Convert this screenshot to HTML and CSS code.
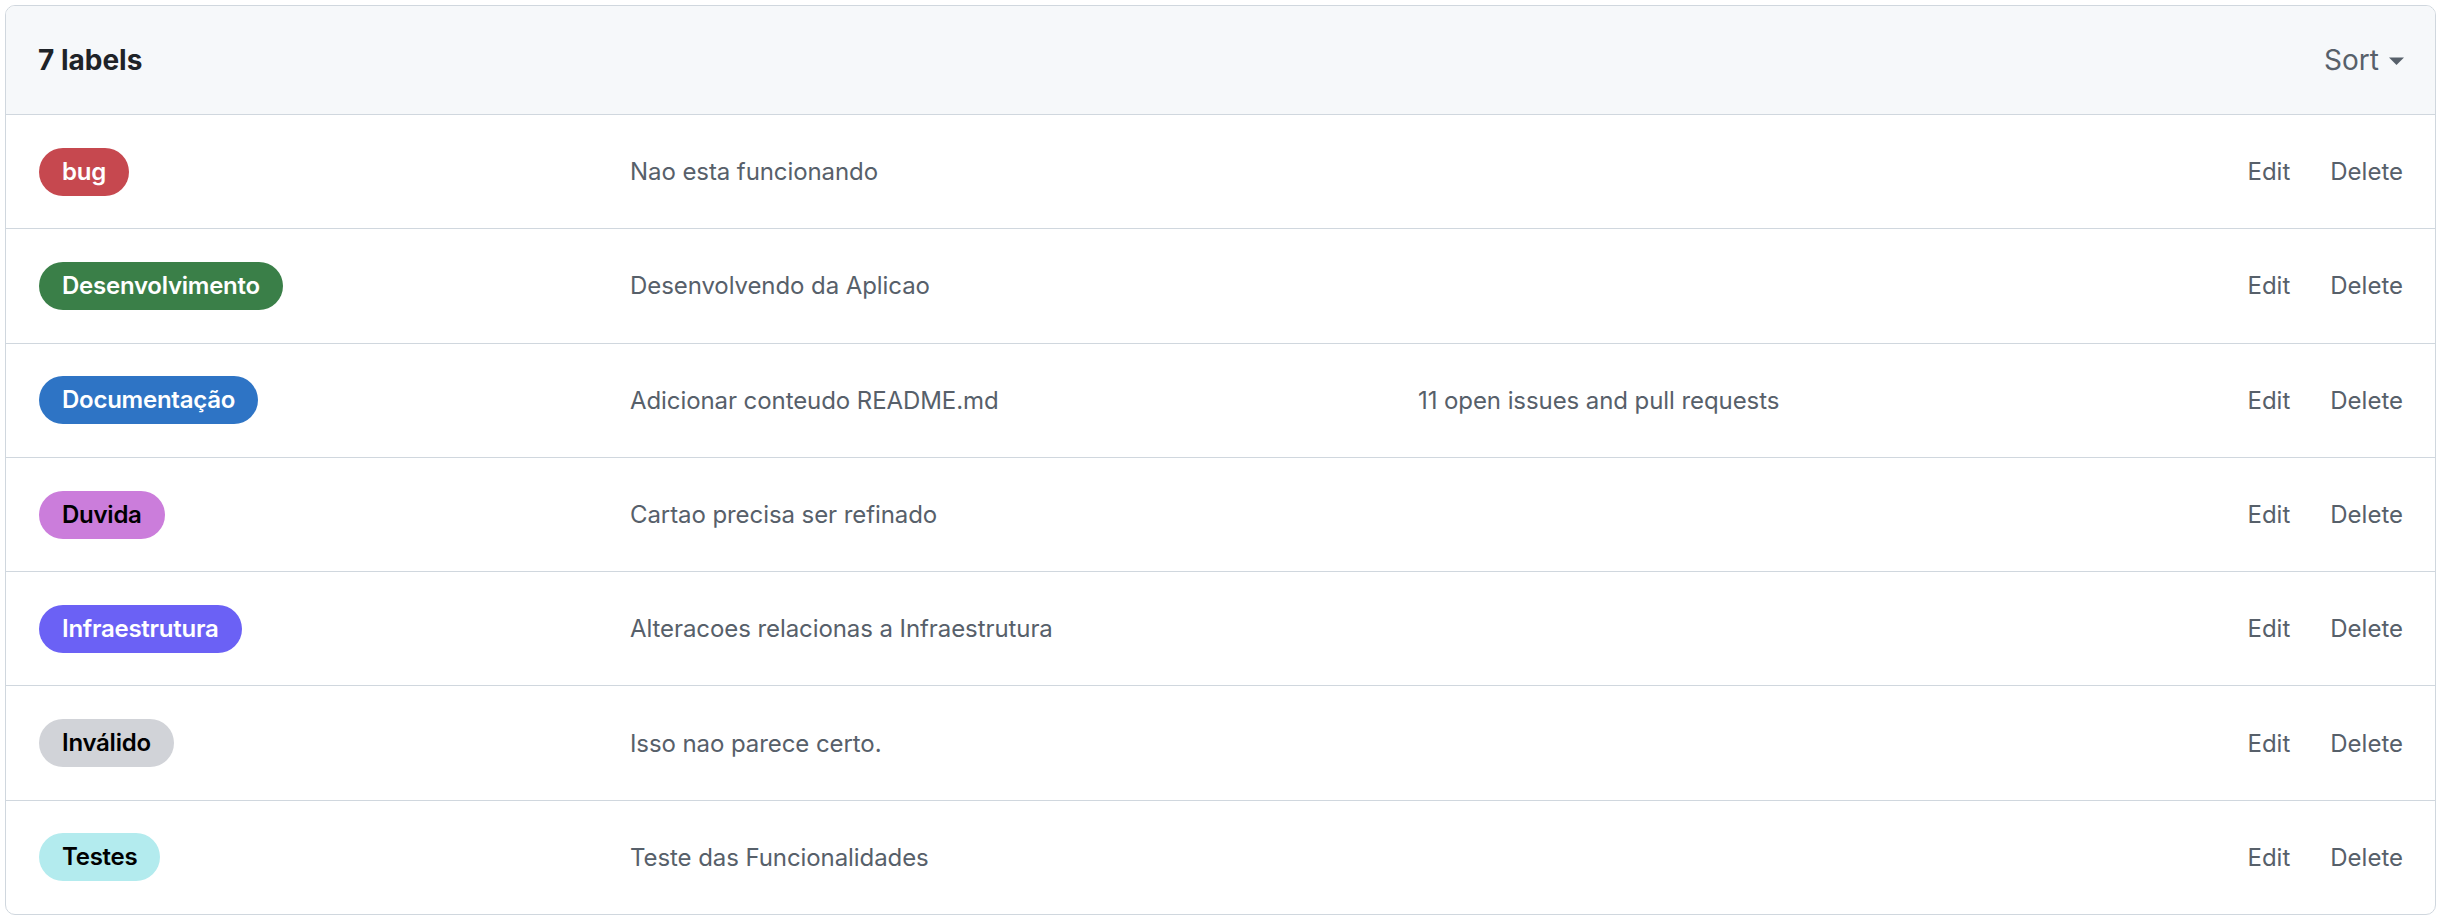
FILE: index.html
```html
<!DOCTYPE html>
<html lang="pt">
<head>
<meta charset="utf-8">
<title>Labels</title>
<link rel="stylesheet" href="styles.css">
</head>
<body>
<div class="box">
  <div class="box-header">
    <h3 class="count">7 labels</h3>
    <button class="sort">Sort <svg class="caret" width="15" height="8" viewBox="0 0 15 8"><path d="M0 0.5 L15 0.5 L7.5 8 Z" fill="#57606a"/></svg></button>
  </div>
  <div class="row">
    <div class="c-label"><span class="label l-bug">bug</span></div>
    <div class="c-desc">Nao esta funcionando</div>
    <div class="c-issues"></div>
    <div class="c-actions"><a class="act">Edit</a><a class="act del">Delete</a></div>
  </div>
  <div class="row">
    <div class="c-label"><span class="label l-dev">Desenvolvimento</span></div>
    <div class="c-desc">Desenvolvendo da Aplicao</div>
    <div class="c-issues"></div>
    <div class="c-actions"><a class="act">Edit</a><a class="act del">Delete</a></div>
  </div>
  <div class="row">
    <div class="c-label"><span class="label l-doc">Documentação</span></div>
    <div class="c-desc">Adicionar conteudo README.md</div>
    <div class="c-issues">11 open issues and pull requests</div>
    <div class="c-actions"><a class="act">Edit</a><a class="act del">Delete</a></div>
  </div>
  <div class="row">
    <div class="c-label"><span class="label l-duv">Duvida</span></div>
    <div class="c-desc">Cartao precisa ser refinado</div>
    <div class="c-issues"></div>
    <div class="c-actions"><a class="act">Edit</a><a class="act del">Delete</a></div>
  </div>
  <div class="row">
    <div class="c-label"><span class="label l-inf">Infraestrutura</span></div>
    <div class="c-desc">Alteracoes relacionas a Infraestrutura</div>
    <div class="c-issues"></div>
    <div class="c-actions"><a class="act">Edit</a><a class="act del">Delete</a></div>
  </div>
  <div class="row">
    <div class="c-label"><span class="label l-inv">Inválido</span></div>
    <div class="c-desc">Isso nao parece certo.</div>
    <div class="c-issues"></div>
    <div class="c-actions"><a class="act">Edit</a><a class="act del">Delete</a></div>
  </div>
  <div class="row">
    <div class="c-label"><span class="label l-tes">Testes</span></div>
    <div class="c-desc">Teste das Funcionalidades</div>
    <div class="c-issues"></div>
    <div class="c-actions"><a class="act">Edit</a><a class="act del">Delete</a></div>
  </div>
</div>
</body>
</html>
```
FILE: styles.css
```css
html, body {
  margin: 0;
  padding: 0;
  background: #ffffff;
}
body {
  padding: 5px 9px 0 5px;
  font-family: Inter, "Noto Sans", "Liberation Sans", sans-serif;
  color: #1f2328;
}
.box {
  border: 1px solid #d0d7de;
  border-radius: 10px;
  overflow: hidden;
  width: 2429px;
}
.box-header {
  height: 108px;
  background: #f6f8fa;
  border-bottom: 1px solid #d0d7de;
  display: flex;
  align-items: center;
  justify-content: space-between;
  padding: 0 31px 0 32px;
}
.count {
  margin: 0;
  font-size: 28px;
  font-weight: 700;
  color: #1f2328;
}
.sort {
  background: none;
  border: 0;
  padding: 0;
  font-family: inherit;
  font-size: 28px;
  color: #57606a;
  display: flex;
  align-items: center;
  gap: 10px;
}
.caret {
  display: block;
  margin-top: 2px;
}
.row {
  height: 113.3px;
  display: grid;
  grid-template-columns: 3fr 4fr 3fr 2fr;
  align-items: center;
  padding: 0 32px 0 33px;
  border-bottom: 1px solid #d0d7de;
  font-size: 24px;
  color: #57606a;
}
.row:last-child {
  border-bottom: 0;
}
.label {
  display: inline-block;
  height: 48px;
  line-height: 48px;
  padding: 0 23px;
  border-radius: 24px;
  font-weight: 600;
  font-size: 24px;
  letter-spacing: -0.25px;
}
.l-bug { background: #c6484f; color: #ffffff; }
.l-dev { background: #3a7f48; color: #ffffff; }
.l-doc { background: #2e74c5; color: #ffffff; }
.l-duv { background: #cb7ddb; color: #000000; }
.l-inf { background: #6b61f5; color: #ffffff; }
.l-inv { background: #d1d3d8; color: #000000; }
.l-tes { background: #b3ebee; color: #000000; }
.c-desc, .c-issues {
  color: #57606a;
  letter-spacing: -0.08px;
}
.c-actions {
  display: flex;
  justify-content: flex-end;
  gap: 40px;
}
.act {
  color: #57606a;
  text-decoration: none;
}
```
